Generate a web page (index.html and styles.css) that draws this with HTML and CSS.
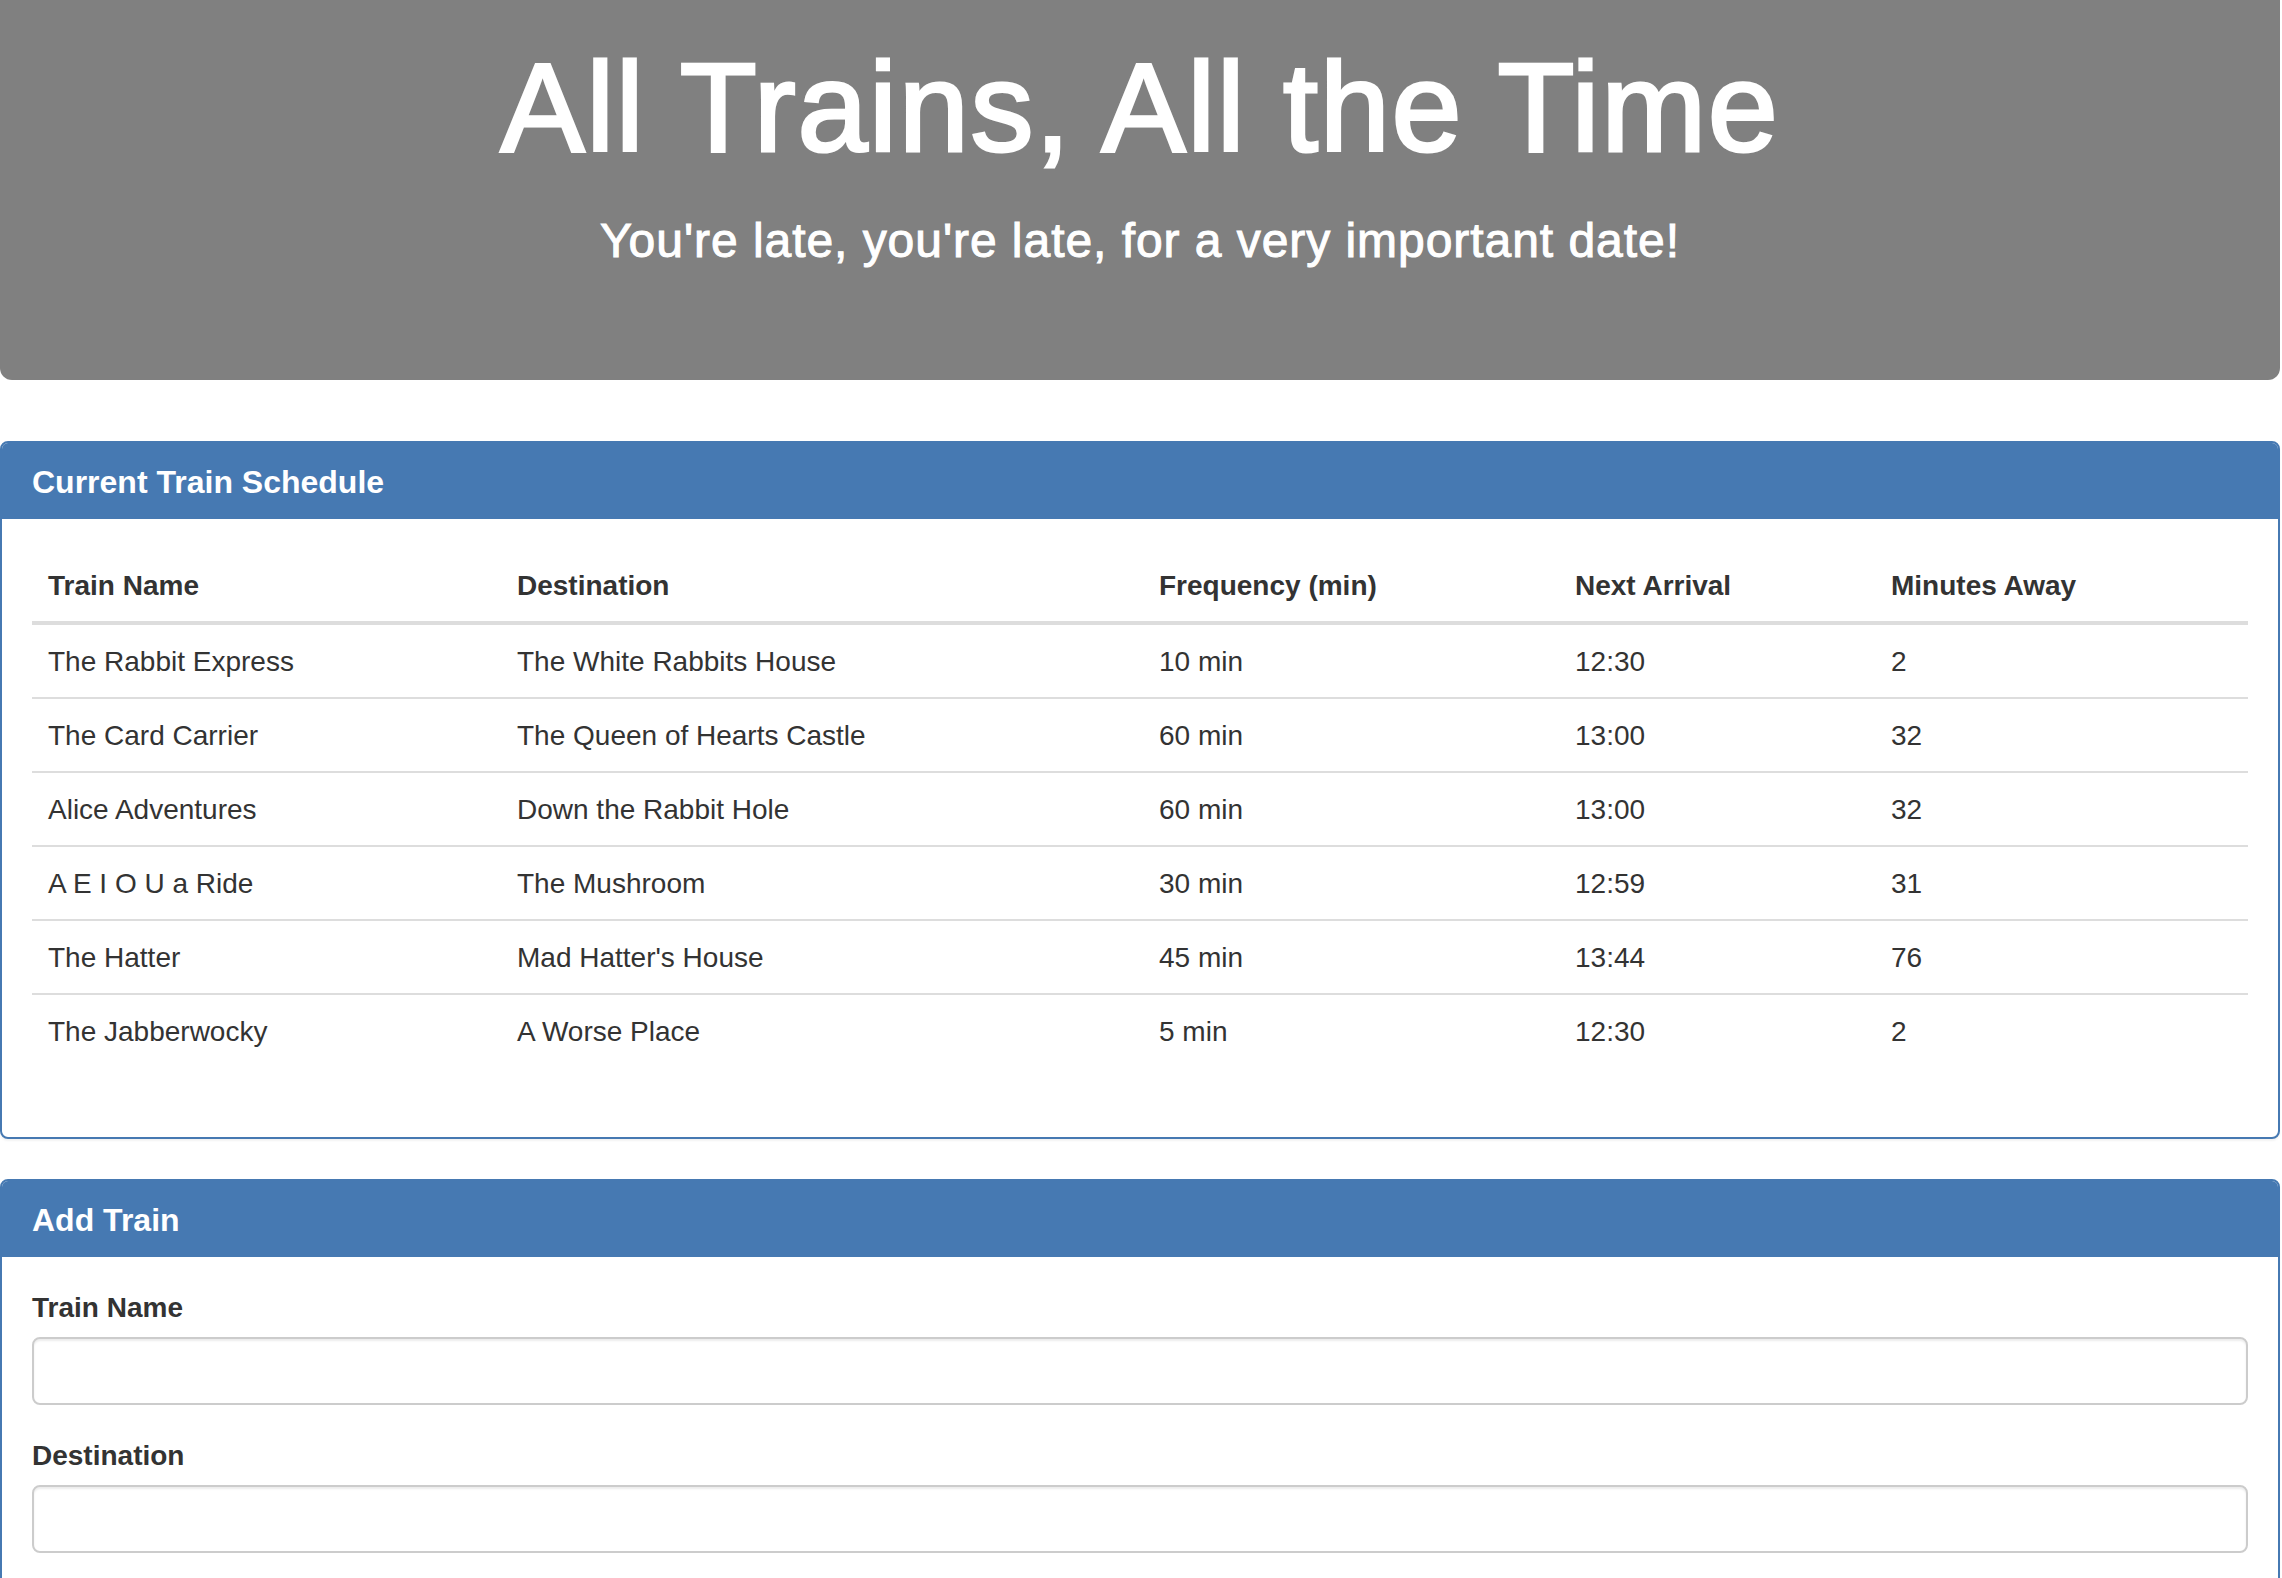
FILE: index.html
```html
<!DOCTYPE html>
<html lang="en">
<head>
<meta charset="utf-8">
<title>Train Scheduler</title>
<link rel="stylesheet" href="styles.css">
</head>
<body>
<div class="page">
  <header class="jumbotron">
    <h1 class="jumbo-title">All Trains, All the Time</h1>
    <h3 class="jumbo-sub">You're late, you're late, for a very important date!</h3>
  </header>

  <section class="panel panel-schedule">
    <div class="panel-heading"><h3 class="panel-title">Current Train Schedule</h3></div>
    <div class="panel-body">
      <table class="schedule">
        <thead>
          <tr>
            <th class="col-name">Train Name</th>
            <th class="col-dest">Destination</th>
            <th class="col-freq">Frequency (min)</th>
            <th class="col-next">Next Arrival</th>
            <th class="col-away">Minutes Away</th>
          </tr>
        </thead>
        <tbody>
          <tr><td>The Rabbit Express</td><td>The White Rabbits House</td><td>10 min</td><td>12:30</td><td>2</td></tr>
          <tr><td>The Card Carrier</td><td>The Queen of Hearts Castle</td><td>60 min</td><td>13:00</td><td>32</td></tr>
          <tr><td>Alice Adventures</td><td>Down the Rabbit Hole</td><td>60 min</td><td>13:00</td><td>32</td></tr>
          <tr><td>A E I O U a Ride</td><td>The Mushroom</td><td>30 min</td><td>12:59</td><td>31</td></tr>
          <tr><td>The Hatter</td><td>Mad Hatter's House</td><td>45 min</td><td>13:44</td><td>76</td></tr>
          <tr><td>The Jabberwocky</td><td>A Worse Place</td><td>5 min</td><td>12:30</td><td>2</td></tr>
        </tbody>
      </table>
    </div>
  </section>

  <section class="panel panel-add">
    <div class="panel-heading"><h3 class="panel-title">Add Train</h3></div>
    <div class="panel-body">
      <form class="train-form">
        <div class="form-group">
          <label class="form-label" for="train-name">Train Name</label>
          <input class="form-control" id="train-name" type="text">
        </div>
        <div class="form-group">
          <label class="form-label" for="destination">Destination</label>
          <input class="form-control" id="destination" type="text">
        </div>
      </form>
    </div>
  </section>
</div>
</body>
</html>
```

FILE: styles.css
```css
* {
  box-sizing: border-box;
}

html, body {
  margin: 0;
  padding: 0;
  background: #ffffff;
}

body {
  font-family: "Liberation Sans", Arial, Helvetica, sans-serif;
  font-size: 28px;
  line-height: 40px;
  color: #333333;
}

.page {
  width: 2280px;
}

/* Jumbotron */
.jumbotron {
  background: #808080;
  color: #ffffff;
  text-align: center;
  border-radius: 0 0 12px 12px;
  padding: 39px 0 113px;
  margin-bottom: 61px;
}

.jumbo-title {
  margin: 0;
  font-size: 126px;
  line-height: 138.6px;
  font-weight: 400;
  letter-spacing: 1.65px;
  -webkit-text-stroke: 3px #ffffff;
}

.jumbo-sub {
  margin: 37px 0 0;
  font-size: 48px;
  line-height: 52.8px;
  font-weight: 400;
  letter-spacing: 0.95px;
  -webkit-text-stroke: 1px #ffffff;
}

/* Panels */
.panel {
  border: 2px solid #4679b2;
  border-radius: 8px;
  background: #ffffff;
  box-shadow: 0 2px 2px rgba(0, 0, 0, 0.05);
  margin-bottom: 40px;
}

.panel-heading {
  background: #4679b2;
  color: #ffffff;
  padding: 20px 30px 18px;
  border-bottom: 2px solid #4679b2;
  border-radius: 6px 6px 0 0;
}

.panel-title {
  margin: 0;
  font-size: 32px;
  line-height: 34px;
  font-weight: 700;
  padding-top: 2px;
}

.panel-body {
  padding: 30px;
}

/* Table */
.schedule {
  width: 100%;
  table-layout: fixed;
  border-collapse: separate;
  border-spacing: 0;
  margin-bottom: 40px;
}

.schedule th,
.schedule td {
  padding: 17px 16px 15px;
  line-height: 40px;
  text-align: left;
  vertical-align: top;
  color: #333333;
}

.schedule th {
  font-weight: 700;
  border-bottom: 4px solid #dddddd;
}

.schedule tbody tr + tr td {
  border-top: 2px solid #dddddd;
}

.col-name { width: 469px; }
.col-dest { width: 642px; }
.col-freq { width: 416px; }
.col-next { width: 316px; }
.col-away { width: 373px; }

/* Form */
.form-group {
  margin-bottom: 30px;
}

.form-label {
  display: block;
  font-weight: 700;
  line-height: 40px;
  padding-top: 1px;
  margin-bottom: 9px;
}

.form-control {
  display: block;
  width: 100%;
  height: 68px;
  padding: 12px 24px;
  font-family: inherit;
  font-size: 28px;
  color: #555555;
  background: #ffffff;
  border: 2px solid #cccccc;
  border-radius: 8px;
  box-shadow: inset 0 2px 2px rgba(0, 0, 0, 0.075);
}
```
